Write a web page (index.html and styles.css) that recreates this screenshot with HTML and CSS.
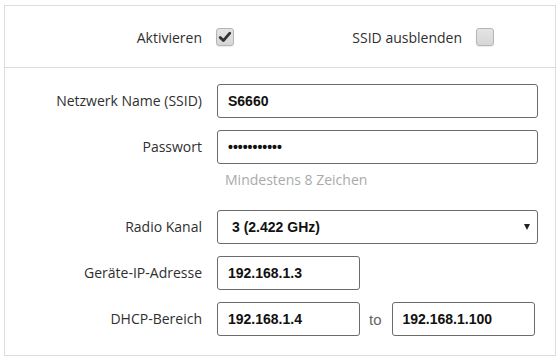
FILE: index.html
```html
<!DOCTYPE html>
<html lang="de">
<head>
    <meta charset="UTF-8">
    <title>WLAN Einstellungen</title>
    <link rel="stylesheet" href="styles.css">
</head>
<body>
    <div class="panel">
        <div class="toggles">
            <span class="label">Aktivieren</span>
            <span class="checkbox checked">
                <svg viewBox="0 0 18 18" width="18" height="18"><path d="M4.2 9.4 L7.4 12.6 L13.8 5.2" fill="none" stroke="#333" stroke-width="2.8" stroke-linecap="round" stroke-linejoin="round"/></svg>
            </span>
            <span class="label">SSID ausblenden</span>
            <span class="checkbox"></span>
        </div>

        <div class="form">
            <div class="field">
                <label class="label">Netzwerk Name (SSID)</label>
                <div class="control">
                    <input class="input wide" type="text" value="S6660">
                </div>
            </div>
            <div class="field">
                <label class="label">Passwort</label>
                <div class="control">
                    <input class="input wide" type="password" value="12345678901">
                    <div class="hint">Mindestens 8 Zeichen</div>
                </div>
            </div>
            <div class="field">
                <label class="label">Radio Kanal</label>
                <div class="control">
                    <div class="select-wrap">
                        <select class="input select">
                            <option>3 (2.422 GHz)</option>
                        </select>
                    </div>
                </div>
            </div>
            <div class="field">
                <label class="label">Geräte-IP-Adresse</label>
                <div class="control">
                    <input class="input short" type="text" value="192.168.1.3">
                </div>
            </div>
            <div class="field">
                <label class="label">DHCP-Bereich</label>
                <div class="control range">
                    <input class="input short" type="text" value="192.168.1.4">
                    <span class="to">to</span>
                    <input class="input short" type="text" value="192.168.1.100">
                </div>
            </div>
        </div>
    </div>
</body>
</html>
```

FILE: styles.css
```css
* {
    margin: 0;
    padding: 0;
    box-sizing: border-box;
}

body {
    font-family: 'Open Sans', 'Liberation Sans', sans-serif;
    background: #fff;
    color: #333;
    padding: 5px 3px 4px 4px;
}

.panel {
    width: 552px;
    height: 351px;
    border: 1px solid #ddd;
}

.label {
    font-size: 14px;
    color: #2f2f2f;
    text-align: right;
}

.toggles {
    display: grid;
    grid-template-columns: 197px 18px 214px 18px;
    column-gap: 14px;
    align-items: center;
    height: 62px;
    padding-top: 1px;
    border-bottom: 1px solid #ddd;
}

.checkbox {
    display: block;
    width: 18px;
    height: 18px;
    border: 1px solid #b5b5b5;
    border-radius: 3px;
    background: linear-gradient(#e4e4e4, #d6d6d6);
    box-shadow: 0 1px 1px rgba(0, 0, 0, 0.08);
}

.checkbox svg {
    display: block;
    margin: -1px;
}

.form {
    padding-top: 16px;
}

.field {
    display: grid;
    grid-template-columns: 197px 1fr;
    column-gap: 15px;
    align-items: start;
    margin-bottom: 12px;
}

.field .label {
    line-height: 34px;
}

.control {
    display: flex;
    flex-direction: column;
}

.input {
    height: 34px;
    border: 1px solid #6b6b6b;
    border-radius: 3px;
    padding: 0 10px;
    font-family: 'Liberation Sans', Arial, sans-serif;
    font-size: 14px;
    font-weight: bold;
    color: #111;
    background: #fff;
    outline: none;
}

.wide {
    width: 321px;
}

.short {
    width: 143px;
}

.hint {
    font-size: 14px;
    line-height: 18px;
    color: #aaa;
    margin: 7px 0 9px 8px;
}

.select-wrap {
    position: relative;
    width: 321px;
}

.select-wrap::after {
    content: '';
    position: absolute;
    right: 8px;
    top: 14px;
    border-left: 3px solid transparent;
    border-right: 3px solid transparent;
    border-top: 6px solid #222;
    pointer-events: none;
}

.select {
    width: 100%;
    appearance: none;
    -webkit-appearance: none;
    padding-left: 14px;
}

.range {
    flex-direction: row;
    align-items: center;
}

.to {
    font-family: 'Liberation Sans', Arial, sans-serif;
    font-size: 15px;
    color: #666;
    margin: 0 10px 0 9px;
}
```
